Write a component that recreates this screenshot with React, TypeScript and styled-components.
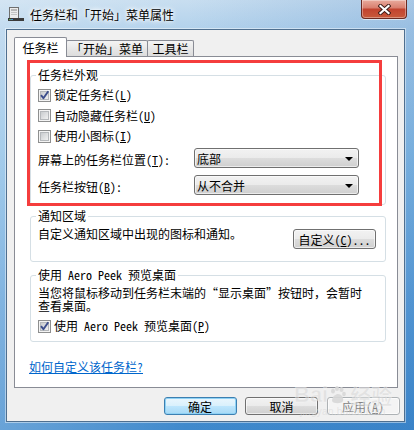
import React from 'react';
import styled, { createGlobalStyle } from 'styled-components';

const GlobalStyle = createGlobalStyle`
  html, body { margin: 0; padding: 0; background: #fff; }
  body {
    font-family: "SimSun", "Noto Sans Mono CJK SC", "Noto Sans CJK SC", sans-serif;
    font-size: 12px;
    line-height: 14px;
    color: #000;
  }
  * { box-sizing: border-box; }
`;

const Window = styled.div`
  position: relative;
  width: 414px;
  height: 430px;
  overflow: hidden;
  display: flex;
  flex-direction: column;
  background:
    linear-gradient(90deg, rgba(255,255,255,0.22) 0, rgba(255,255,255,0) 45%, rgba(30,100,180,0.18) 100%),
    linear-gradient(180deg, #c8def0 0, #b3d2ec 29px, #8cbfe6 35%, #5e9fd8 70%, #3f89cc 100%);
`;

const TitleBar = styled.div`
  height: 29px;
  flex: none;
  display: flex;
  align-items: flex-start;
  padding: 0 7px 0 8px;
`;

const AppIcon = styled.svg`
  flex: none;
  margin-top: 6px;
`;

const TitleText = styled.div`
  margin: 8px 0 0 6px;
  font-family: "Noto Sans CJK SC", sans-serif;
  font-size: 12px;
  line-height: 14px;
  color: #000;
  text-shadow: 0 0 6px #fff, 0 0 4px #fff, 0 0 2px rgba(255,255,255,0.8);
`;

const CloseButton = styled.div`
  margin-left: auto;
  width: 46px;
  height: 19px;
  border: 1px solid #6b2a22;
  border-top: none;
  border-radius: 0 0 4px 4px;
  background: linear-gradient(180deg, #e9ab9d 0, #d98070 42%, #c2432f 52%, #c85a3b 100%);
  box-shadow: inset 0 0 0 1px rgba(255,255,255,0.35), 0 1px 0 rgba(255,255,255,0.6);
  display: flex;
  align-items: center;
  justify-content: center;
`;

const Client = styled.div`
  margin: 0 9px 0 6px;
  height: 393px;
  flex: none;
  border: 1px solid #4f6f8f;
  background: #f0f0f0;
  padding: 7px 6px 6px 7px;
  display: flex;
  flex-direction: column;
  box-shadow: 0 0 0 1px rgba(255,255,255,0.45);
`;

const TabStrip = styled.div`
  display: flex;
  align-items: flex-end;
  height: 20px;
  flex: none;
  margin-bottom: -1px;
  position: relative;
  z-index: 1;
`;

const Tab = styled.div<{ $active?: boolean; $w: number }>`
  width: ${p => p.$w}px;
  height: ${p => (p.$active ? 20 : 16)}px;
  margin-bottom: ${p => (p.$active ? 0 : 1)}px;
  margin-left: ${p => (p.$active ? 0 : -1)}px;
  border: 1px solid #898c95;
  border-bottom: none;
  border-radius: 2px 2px 0 0;
  background: ${p => (p.$active ? '#fff' : 'linear-gradient(180deg, #f4f4f4 0, #e8e8e8 50%, #dcdcdc 100%)')};
  display: flex;
  align-items: center;
  justify-content: center;
  padding-top: ${p => (p.$active ? 1 : 1)}px;
  position: relative;
  z-index: ${p => (p.$active ? 2 : 1)};
  white-space: nowrap;
`;

const Panel = styled.div`
  position: relative;
  height: 332px;
  flex: none;
  border: 1px solid #898c95;
  background: #fff;
  padding: 18px 11px 0 15px;
  display: flex;
  flex-direction: column;
`;

const Highlight = styled.div`
  position: absolute;
  left: 12px;
  top: 3px;
  width: 355px;
  height: 146px;
  border: 3px solid #f53d3d;
  pointer-events: none;
  z-index: 3;
`;

const GroupBox = styled.div<{ $mt: number; $pb: number }>`
  margin-top: ${p => p.$mt}px;
  border: 1px solid #d5dfe5;
  border-radius: 3px;
  padding: 0 7px ${p => p.$pb}px;
  display: flex;
  flex-direction: column;
`;

const GroupTitle = styled.div`
  align-self: flex-start;
  margin: -8px 0 0 -2px;
  padding: 0 2px;
  height: 14px;
  line-height: 14px;
  background: #fff;
  white-space: nowrap;
`;

const CheckRow = styled.div<{ $mt?: number }>`
  display: flex;
  align-items: center;
  gap: 3px;
  height: 20.5px;
  margin-top: ${p => p.$mt ?? 0}px;
  white-space: nowrap;
`;

const ComboGrid = styled.div`
  display: grid;
  grid-template-columns: 156px 165px;
  row-gap: 7px;
  margin-top: 1.5px;
  align-items: center;
`;

const ComboLabel = styled.div`
  padding-top: 4px;
  white-space: nowrap;
`;

const Combo = styled.div`
  height: 20px;
  border: 1px solid #707070;
  border-radius: 3px;
  background: linear-gradient(180deg, #f2f2f2 0, #ebebeb 50%, #dddddd 50%, #cfcfcf 100%);
  box-shadow: inset 0 0 0 1px rgba(255,255,255,0.6);
  display: flex;
  align-items: center;
  padding: 1px 4px 0 2px;
  justify-content: space-between;
`;

const Arrow = styled.span`
  width: 0;
  height: 0;
  border-left: 4px solid transparent;
  border-right: 4px solid transparent;
  border-top: 4px solid #000;
  margin-right: 1px;
`;

const NotifyRow = styled.div`
  margin-top: 4px;
  display: flex;
  justify-content: space-between;
  align-items: flex-start;
`;

const PushButton = styled.div<{ $w: number; $h: number; $variant?: 'default' | 'disabled' }>`
  width: ${p => p.$w}px;
  height: ${p => p.$h}px;
  flex: none;
  border: 1px solid ${p => (p.$variant === 'default' ? '#3c7fb1' : p.$variant === 'disabled' ? '#adb2b5' : '#707070')};
  border-radius: 3px;
  background: ${p =>
    p.$variant === 'default'
      ? 'linear-gradient(180deg, #eaf6fd 0, #d9f0fc 50%, #bee6fd 50%, #a7d9f5 100%)'
      : p.$variant === 'disabled'
      ? '#f4f4f4'
      : 'linear-gradient(180deg, #f2f2f2 0, #ebebeb 50%, #dddddd 50%, #cfcfcf 100%)'};
  box-shadow: ${p => (p.$variant === 'default' ? 'inset 0 0 0 1px #8fd2f5' : 'inset 0 0 0 1px rgba(255,255,255,0.6)')};
  color: ${p => (p.$variant === 'disabled' ? '#838383' : '#000')};
  display: flex;
  align-items: center;
  justify-content: center;
  padding-top: 1px;
  white-space: nowrap;
`;

const NotifyButton = styled(PushButton)`
  margin: 2px 2px 0 0;
`;

const Desc = styled.div`
  margin-top: 4px;
  line-height: 13px;
  white-space: nowrap;
`;

const HelpLink = styled.a`
  margin: 18px 0 0 -1px;
  align-self: flex-start;
  color: #0066cc;
  text-decoration: underline;
  line-height: 14px;
  cursor: pointer;
`;

const ButtonRow = styled.div`
  display: flex;
  justify-content: flex-end;
  gap: 8.5px;
  margin: 9px -1.5px 0 0;
  flex: none;
`;

const Watermark = styled.div`
  position: absolute;
  left: 294px;
  top: 383px;
  display: flex;
  flex-direction: column;
  color: rgba(215, 215, 215, 0.55);
  pointer-events: none;
  z-index: 5;
`;

const WatermarkMain = styled.div`
  display: flex;
  align-items: center;
  font-family: "Liberation Sans", Arial, sans-serif;
  font-weight: bold;
  font-size: 22px;
  line-height: 24px;
  -webkit-text-stroke: 0.5px rgba(255,255,255,0.5);
`;

const WatermarkCn = styled.span`
  font-family: "Noto Sans CJK SC", sans-serif;
  font-size: 21px;
  margin-left: 2px;
`;

const WatermarkSub = styled.div`
  font-family: "Liberation Sans", Arial, sans-serif;
  font-size: 10px;
  line-height: 10px;
  letter-spacing: 0.3px;
  margin-left: 6px;
`;

const CheckBox: React.FC<{ checked?: boolean }> = ({ checked }) => (
  <svg width="13" height="13" viewBox="0 0 13 13" style={{ flex: 'none' }}>
    <defs>
      <linearGradient id="cbg" x1="0" y1="0" x2="1" y2="1">
        <stop offset="0" stopColor="#c6c9cc" />
        <stop offset="1" stopColor="#f3f3f3" />
      </linearGradient>
    </defs>
    <rect x="0.5" y="0.5" width="12" height="12" fill="#f4f4f4" stroke="#8e8f8f" />
    <rect x="2.5" y="2.5" width="8" height="8" fill="url(#cbg)" stroke="#b5b8bb" />
    {checked && (
      <path d="M3 6.2 L5.4 9.2 L10.3 2.2" fill="none" stroke="#3c4e8c" strokeWidth="1.9" strokeLinejoin="round" />
    )}
  </svg>
);

const Mn: React.FC<{ k: string }> = ({ k }) => (
  <>
    (<u>{k}</u>)
  </>
);

export default function App() {
  return (
    <>
      <GlobalStyle />
      <Window>
        <TitleBar>
          <AppIcon width="16" height="16" viewBox="0 0 16 16">
            <rect x="1.5" y="1.5" width="9" height="12" fill="#ececec" stroke="#6f6f6f" />
            <rect x="3" y="3" width="6" height="2" fill="#b8b8b8" />
            <rect x="3" y="6" width="6" height="1" fill="#c4c4c4" />
            <rect x="3" y="8" width="6" height="1" fill="#c4c4c4" />
            <rect x="0" y="12" width="16" height="3" fill="#3b3b3b" />
            <rect x="1" y="13" width="2" height="1" fill="#5fb05a" />
            <rect x="3" y="13" width="2" height="1" fill="#4a8fd8" />
          </AppIcon>
          <TitleText>任务栏和「开始」菜单属性</TitleText>
          <CloseButton>
            <svg width="13" height="11" viewBox="0 0 13 11">
              <path d="M2.5 2 L10.5 9 M10.5 2 L2.5 9" stroke="#3a1a16" strokeWidth="4" strokeLinecap="square" />
              <path d="M2.5 2 L10.5 9 M10.5 2 L2.5 9" stroke="#fff" strokeWidth="2.2" strokeLinecap="square" />
            </svg>
          </CloseButton>
        </TitleBar>
        <Client>
          <TabStrip>
            <Tab $active $w={53}>任务栏</Tab>
            <Tab $w={82}>「开始」菜单</Tab>
            <Tab $w={47}>工具栏</Tab>
          </TabStrip>
          <Panel>
            <Highlight />
            <GroupBox $mt={0} $pb={9}>
              <GroupTitle>任务栏外观</GroupTitle>
              <CheckRow $mt={3}>
                <CheckBox checked />
                <span>锁定任务栏<Mn k="L" /></span>
              </CheckRow>
              <CheckRow>
                <CheckBox />
                <span>自动隐藏任务栏<Mn k="U" /></span>
              </CheckRow>
              <CheckRow>
                <CheckBox />
                <span>使用小图标<Mn k="I" /></span>
              </CheckRow>
              <ComboGrid>
                <ComboLabel>屏幕上的任务栏位置<Mn k="T" />:</ComboLabel>
                <Combo>
                  <span>底部</span>
                  <Arrow />
                </Combo>
                <ComboLabel>任务栏按钮<Mn k="B" />:</ComboLabel>
                <Combo>
                  <span>从不合并</span>
                  <Arrow />
                </Combo>
              </ComboGrid>
            </GroupBox>
            <GroupBox $mt={11} $pb={12}>
              <GroupTitle>通知区域</GroupTitle>
              <NotifyRow>
                <span>自定义通知区域中出现的图标和通知。</span>
                <NotifyButton $w={83} $h={20}>
                  自定义<Mn k="C" />...
                </NotifyButton>
              </NotifyRow>
            </GroupBox>
            <GroupBox $mt={13} $pb={4}>
              <GroupTitle>使用 Aero Peek 预览桌面</GroupTitle>
              <Desc>
                当您将鼠标移动到任务栏末端的“显示桌面”按钮时，会暂时
                <br />
                查看桌面。
              </Desc>
              <CheckRow $mt={4}>
                <CheckBox checked />
                <span>使用 Aero Peek 预览桌面<Mn k="P" /></span>
              </CheckRow>
            </GroupBox>
            <HelpLink>如何自定义该任务栏?</HelpLink>
          </Panel>
          <ButtonRow>
            <PushButton $w={73} $h={18} $variant="default">确定</PushButton>
            <PushButton $w={73} $h={18}>取消</PushButton>
            <PushButton $w={73} $h={18} $variant="disabled">应用<Mn k="A" /></PushButton>
          </ButtonRow>
        </Client>
        <Watermark>
          <WatermarkMain>
            Bai
            <svg width="20" height="20" viewBox="0 0 20 20">
              <g fill="rgba(215,215,215,0.9)">
                <ellipse cx="5" cy="6" rx="2" ry="2.6" />
                <ellipse cx="9" cy="3.5" rx="2" ry="2.6" />
                <ellipse cx="13.5" cy="4.5" rx="2" ry="2.6" />
                <ellipse cx="16" cy="9" rx="1.8" ry="2.3" />
                <path d="M4 16 C4 11 8 9 10 9 C13 9 16 12 15 16 C14 19 5 19 4 16 Z" />
              </g>
            </svg>
            <WatermarkCn>经验</WatermarkCn>
          </WatermarkMain>
          <WatermarkSub>jingyan.baidu.com</WatermarkSub>
        </Watermark>
      </Window>
    </>
  );
}
